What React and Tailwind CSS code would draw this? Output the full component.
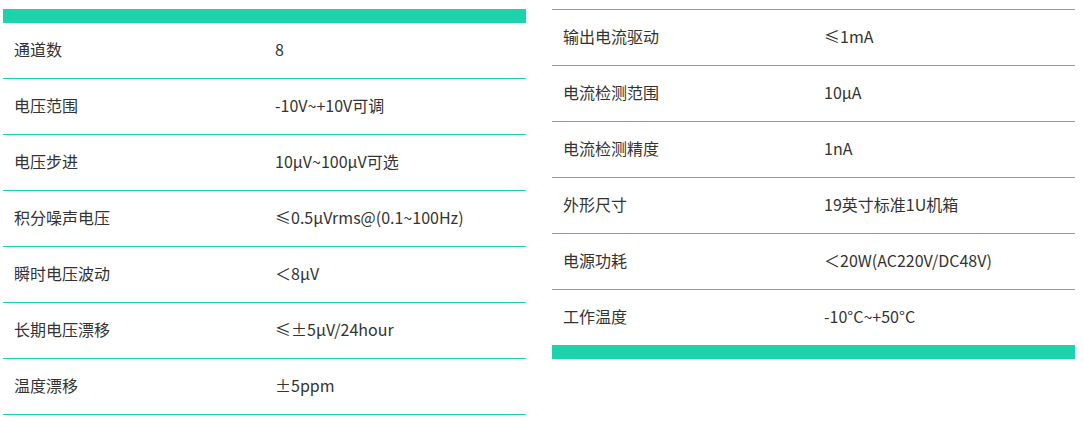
const leftRows = [
  ["通道数", "8"],
  ["电压范围", "-10V~+10V可调"],
  ["电压步进", "10μV~100μV可选"],
  ["积分噪声电压", "≤0.5μVrms@(0.1~100Hz)"],
  ["瞬时电压波动", "＜8μV"],
  ["长期电压漂移", "≤±5μV/24hour"],
  ["温度漂移", "±5ppm"],
];

const rightRows = [
  ["输出电流驱动", "≤1mA"],
  ["电流检测范围", "10μA"],
  ["电流检测精度", "1nA"],
  ["外形尺寸", "19英寸标准1U机箱"],
  ["电源功耗", "＜20W(AC220V/DC48V)"],
  ["工作温度", "-10°C~+50°C"],
];

function Row({ label, value, last }) {
  return (
    <div
      className={`flex items-center pb-[4px] ${
        last ? "h-[55px]" : "h-[56px] border-b border-[#1cd3ac]"
      }`}
    >
      <div className="w-[272px] pl-[11px]">{label}</div>
      <div>{value}</div>
    </div>
  );
}

export default function App() {
  return (
    <div
      className="flex bg-white w-[1084px] h-[421px] pt-[9px] pl-[3px] text-[16px] text-[#333]"
      style={{ fontFamily: '"Noto Sans CJK SC", "Noto Sans", sans-serif' }}
    >
      {/* LEFT TABLE */}
      <div className="w-[523px]">
        <div className="h-[14px] bg-[#1cd3ac]" />
        {leftRows.map(([l, v]) => (
          <Row key={l} label={l} value={v} />
        ))}
      </div>

      {/* RIGHT TABLE */}
      <div className="w-[523px] ml-[26px] border-t border-[#1cd3ac]">
        {rightRows.map(([l, v], i) => (
          <Row key={l} label={l} value={v} last={i === rightRows.length - 1} />
        ))}
        <div className="h-[14px] bg-[#1cd3ac]" />
      </div>
    </div>
  );
}
